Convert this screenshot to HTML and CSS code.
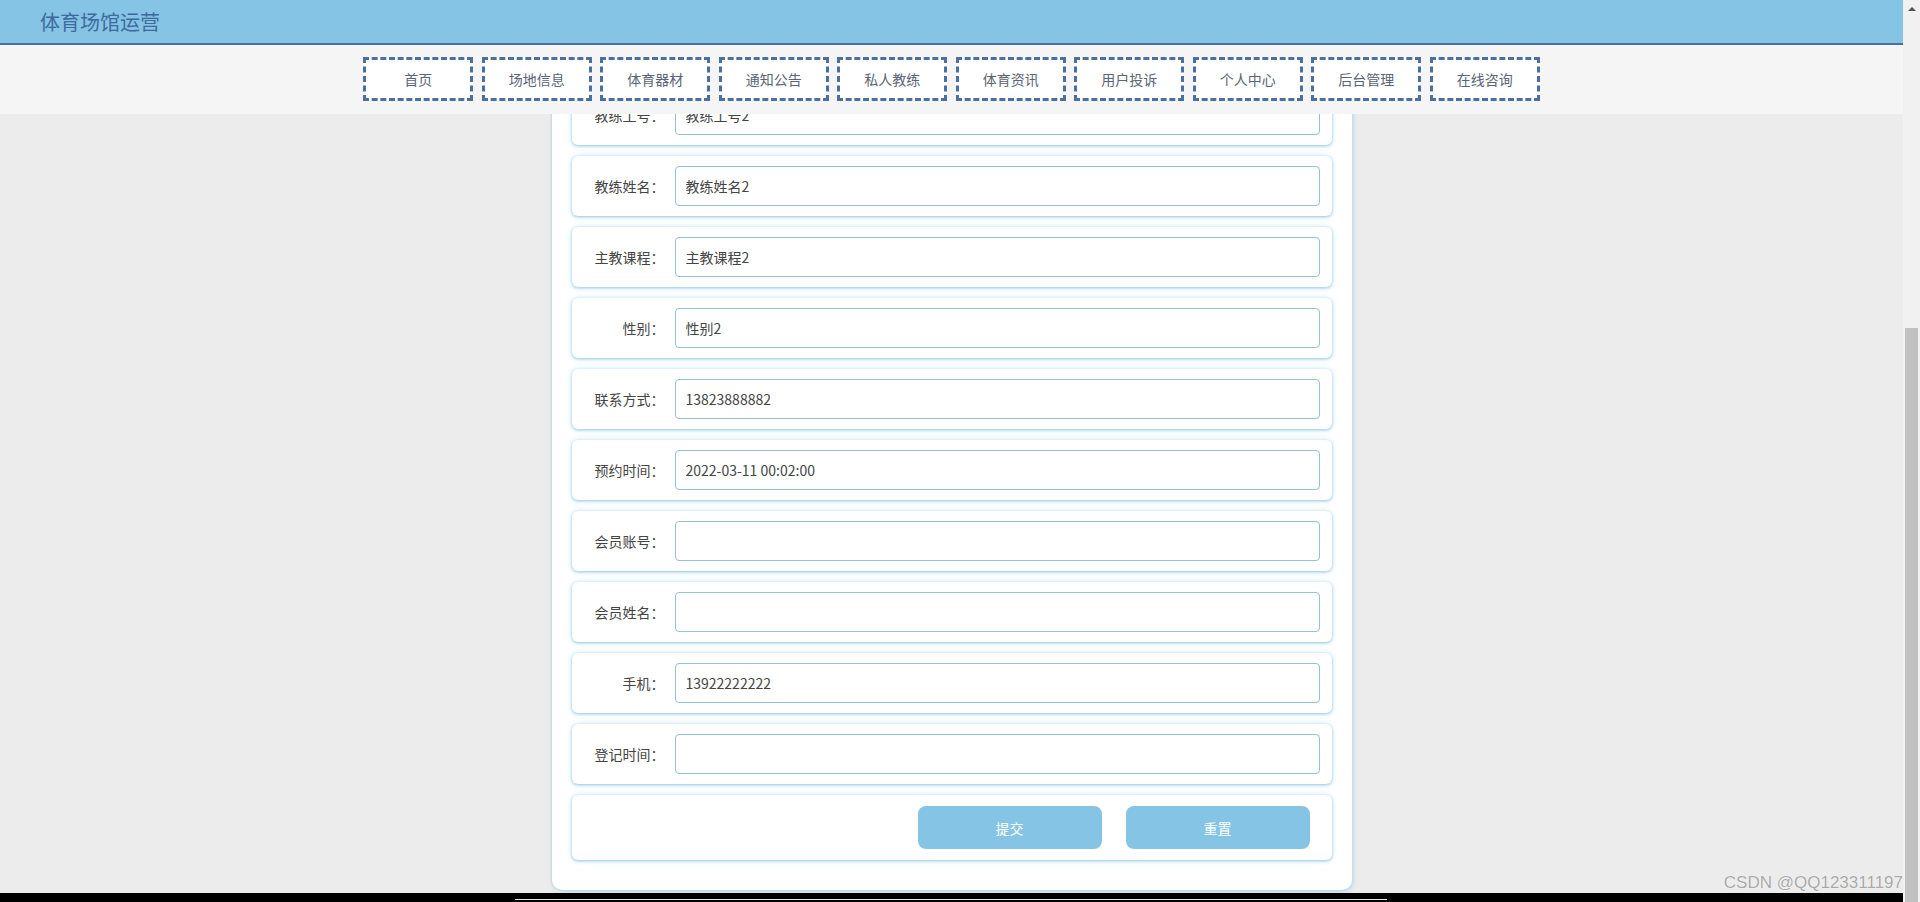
FILE: index.html
```html
<!DOCTYPE html>
<html lang="zh-CN">
<head>
<meta charset="utf-8">
<title>体育场馆运营</title>
<link rel="stylesheet" href="styles.css">
</head>
<body>
<div class="screen">
  <div class="main-col">
    <div class="page">
      <header class="topbar"><span class="brand">体育场馆运营</span></header>
      <nav class="menu">
        <a class="menu-item">首页</a>
        <a class="menu-item">场地信息</a>
        <a class="menu-item">体育器材</a>
        <a class="menu-item">通知公告</a>
        <a class="menu-item">私人教练</a>
        <a class="menu-item">体育资讯</a>
        <a class="menu-item">用户投诉</a>
        <a class="menu-item">个人中心</a>
        <a class="menu-item">后台管理</a>
        <a class="menu-item">在线咨询</a>
      </nav>
      <main class="content">
        <form class="card">
          <div class="row"><label class="label">教练工号：</label><input class="field" value="教练工号2"></div>
          <div class="row"><label class="label">教练姓名：</label><input class="field" value="教练姓名2"></div>
          <div class="row"><label class="label">主教课程：</label><input class="field" value="主教课程2"></div>
          <div class="row"><label class="label">性别：</label><input class="field" value="性别2"></div>
          <div class="row"><label class="label">联系方式：</label><input class="field" value="13823888882"></div>
          <div class="row"><label class="label">预约时间：</label><input class="field" value="2022-03-11 00:02:00"></div>
          <div class="row"><label class="label">会员账号：</label><input class="field" value=""></div>
          <div class="row"><label class="label">会员姓名：</label><input class="field" value=""></div>
          <div class="row"><label class="label">手机：</label><input class="field" value="13922222222"></div>
          <div class="row"><label class="label">登记时间：</label><input class="field" value=""></div>
          <div class="row actions">
            <button type="button" class="btn">提交</button>
            <button type="button" class="btn">重置</button>
          </div>
        </form>
      </main>
      <div class="watermark">CSDN @QQ123311197</div>
    </div>
    <div class="taskbar"><div class="taskbar-line"></div></div>
  </div>
  <div class="vscroll">
    <div class="vscroll-btn"><span class="arrow-up"></span></div>
    <div class="vscroll-track"><div class="vscroll-thumb"></div></div>
  </div>
</div>
</body>
</html>
```
FILE: styles.css
```css
html, body {
  margin: 0;
  padding: 0;
  height: 902px;
  overflow: hidden;
}
body {
  font-family: "Noto Sans CJK SC", "Liberation Sans", sans-serif;
  background: #ececec;
}
.screen {
  display: flex;
  height: 902px;
}
.main-col {
  width: 1903px;
  display: flex;
  flex-direction: column;
}
.page {
  position: relative;
  height: 893px;
  display: flex;
  flex-direction: column;
  overflow: hidden;
}
.topbar {
  height: 43px;
  background: #85c4e4;
  border-bottom: 2px solid #4a6fa0;
  display: flex;
  align-items: center;
  padding-left: 40px;
  flex-shrink: 0;
}
.brand {
  font-size: 20px;
  color: #3d6a9e;
  line-height: 1;
}
.menu {
  height: 69px;
  box-sizing: border-box;
  padding-top: 12px;
  background: #f5f5f5;
  display: flex;
  justify-content: center;
  gap: 8.5px;
  flex-shrink: 0;
}
.menu-item {
  width: 110px;
  height: 44px;
  box-sizing: border-box;
  border: 3px dashed #4a6fa0;
  background: #fff;
  display: flex;
  align-items: center;
  justify-content: center;
  font-size: 14px;
  color: #5a6475;
}
.content {
  flex: 1;
  overflow: hidden;
  background: #ececec;
  display: flex;
  justify-content: center;
  align-items: flex-start;
}
.card {
  width: 800px;
  box-sizing: border-box;
  margin: -29px 0 0;
  padding: 0 20px 30px;
  background: #fff;
  border-radius: 0 0 10px 10px;
  box-shadow: -1px 0 2px rgba(0, 0, 0, 0.08), 1px 1px 4px rgba(133, 196, 228, 0.6);
  display: flex;
  flex-direction: column;
  gap: 11px;
}
.row {
  height: 60px;
  box-sizing: border-box;
  padding: 10px 12px 10px 0;
  display: flex;
  align-items: center;
  background: #fff;
  border-radius: 6px;
  box-shadow: 0 1px 3px rgba(120, 185, 220, 0.75), 0 0 6px rgba(133, 196, 228, 0.35);
}
.label {
  width: 93px;
  margin-right: 10px;
  text-align: right;
  font-size: 14px;
  color: #444;
  flex-shrink: 0;
}
.field {
  flex: 1;
  height: 40px;
  box-sizing: border-box;
  border: 1px solid #94c1d5;
  border-radius: 4px;
  padding: 0 10px;
  font-family: "Noto Sans CJK SC", "Liberation Sans", sans-serif;
  font-size: 14px;
  color: #444;
  background: #fff;
  outline: none;
}
.actions {
  height: 65px;
  padding: 11px 22px 11px 0;
  justify-content: flex-end;
  gap: 24px;
}
.btn {
  width: 184px;
  height: 43px;
  border: 0;
  border-radius: 8px;
  background: #85c4e4;
  color: #fff;
  font-family: "Noto Sans CJK SC", "Liberation Sans", sans-serif;
  font-size: 14px;
}
.watermark {
  position: absolute;
  right: 0;
  bottom: 0;
  font-family: "Liberation Sans", sans-serif;
  font-size: 17px;
  line-height: 20px;
  color: #a8a8a8;
  text-shadow: 0 0 1px #fff, 0 0 1px #fff;
}
.taskbar {
  height: 9px;
  background: #000;
  display: flex;
  flex-direction: column;
}
.taskbar-line {
  margin: 6px 0 0 515px;
  width: 872px;
  height: 1px;
  background: #e8e8e8;
}
.vscroll {
  width: 17px;
  background: #f1f1f1;
  display: flex;
  flex-direction: column;
}
.vscroll-btn {
  height: 17px;
  display: flex;
  align-items: center;
  justify-content: center;
}
.arrow-up {
  width: 0;
  height: 0;
  border-left: 4px solid transparent;
  border-right: 4px solid transparent;
  border-bottom: 4px solid #505050;
}
.vscroll-track {
  flex: 1;
  display: flex;
  flex-direction: column;
  padding-top: 311px;
}
.vscroll-thumb {
  flex: 1;
  margin: 0 2px;
  background: #c1c1c1;
}
```
